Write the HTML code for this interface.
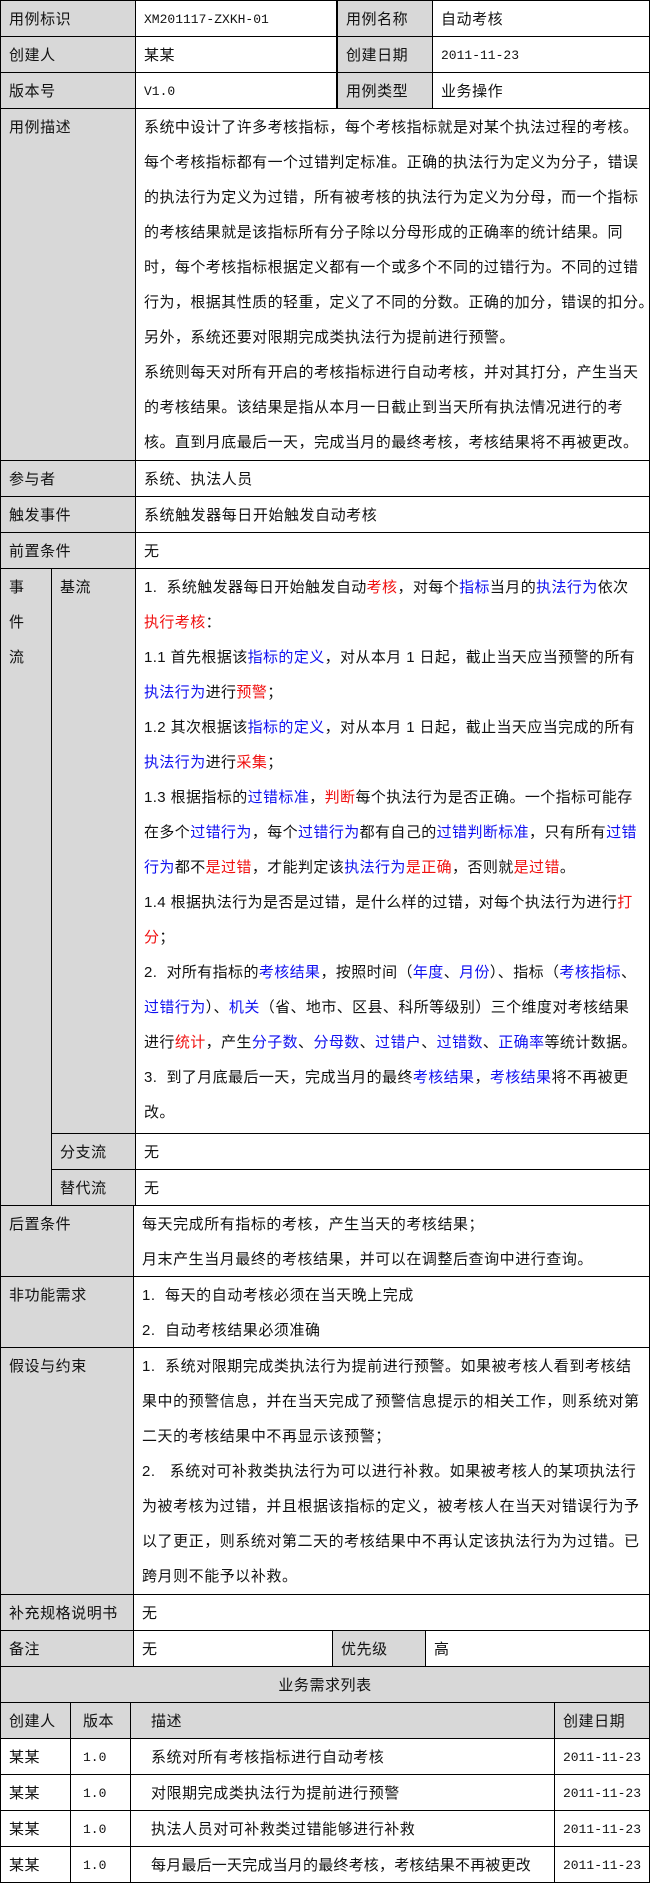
<!DOCTYPE html>
<html><head><meta charset="utf-8">
<style>
body{margin:0;background:#fff;width:650px;height:1890px;overflow:hidden}
#t{position:absolute;left:0;top:0;width:650px;height:1883px;background:#000}
.c{position:absolute;background:#fff;box-sizing:border-box;padding:1px 0 0 8px;line-height:35px;white-space:nowrap;overflow:hidden;
font-family:"Liberation Sans","Noto Sans CJK SC",sans-serif;font-size:15px;letter-spacing:0.55px;color:#111}
.g{background:#d8d8d8}
.b{color:#1010f0}.r{color:#f01010}
.m{font-family:"Liberation Mono","Noto Sans CJK SC",monospace;font-size:13px;letter-spacing:0}
</style></head><body><div id="t">
<div class="c g" style="left:1px;top:1px;width:134px;height:35px">用例标识</div>
<div class="c m" style="left:136px;top:1px;width:200px;height:35px">XM201117-ZXKH-01</div>
<div class="c g" style="left:338px;top:1px;width:94px;height:35px">用例名称</div>
<div class="c" style="left:433px;top:1px;width:216px;height:35px">自动考核</div>
<div class="c g" style="left:1px;top:37px;width:134px;height:35px">创建人</div>
<div class="c" style="left:136px;top:37px;width:200px;height:35px">某某</div>
<div class="c g" style="left:338px;top:37px;width:94px;height:35px">创建日期</div>
<div class="c m" style="left:433px;top:37px;width:216px;height:35px">2011-11-23</div>
<div class="c g" style="left:1px;top:73px;width:134px;height:35px">版本号</div>
<div class="c m" style="left:136px;top:73px;width:200px;height:35px">V1.0</div>
<div class="c g" style="left:338px;top:73px;width:94px;height:35px">用例类型</div>
<div class="c" style="left:433px;top:73px;width:216px;height:35px">业务操作</div>
<div class="c g" style="left:1px;top:109px;width:134px;height:351px">用例描述</div>
<div class="c" style="left:136px;top:109px;width:513px;height:351px;letter-spacing:0.45px">系统中设计了许多考核指标，每个考核指标就是对某个执法过程的考核。<br>每个考核指标都有一个过错判定标准。正确的执法行为定义为分子，错误<br>的执法行为定义为过错，所有被考核的执法行为定义为分母，而一个指标<br>的考核结果就是该指标所有分子除以分母形成的正确率的统计结果。同<br>时，每个考核指标根据定义都有一个或多个不同的过错行为。不同的过错<br>行为，根据其性质的轻重，定义了不同的分数。正确的加分，错误的扣分。<br>另外，系统还要对限期完成类执法行为提前进行预警。<br>系统则每天对所有开启的考核指标进行自动考核，并对其打分，产生当天<br>的考核结果。该结果是指从本月一日截止到当天所有执法情况进行的考<br>核。直到月底最后一天，完成当月的最终考核，考核结果将不再被更改。</div>
<div class="c g" style="left:1px;top:461px;width:134px;height:35px">参与者</div>
<div class="c" style="left:136px;top:461px;width:513px;height:35px">系统、执法人员</div>
<div class="c g" style="left:1px;top:497px;width:134px;height:35px">触发事件</div>
<div class="c" style="left:136px;top:497px;width:513px;height:35px">系统触发器每日开始触发自动考核</div>
<div class="c g" style="left:1px;top:533px;width:134px;height:35px">前置条件</div>
<div class="c" style="left:136px;top:533px;width:513px;height:35px">无</div>
<div class="c g" style="left:1px;top:569px;width:50px;height:636px">事<br>件<br>流</div>
<div class="c g" style="left:52px;top:569px;width:83px;height:564px">基流</div>
<div class="c" style="left:136px;top:569px;width:513px;height:564px;letter-spacing:0.4px">1.&nbsp; 系统触发器每日开始触发自动<span class="r">考核</span>，对每个<span class="b">指标</span>当月的<span class="b">执法行为</span>依次<br><span class="r">执行考核</span>：<br>1.1 首先根据该<span class="b">指标的定义</span>，对从本月 1 日起，截止当天应当预警的所有<br><span class="b">执法行为</span>进行<span class="r">预警</span>；<br>1.2 其次根据该<span class="b">指标的定义</span>，对从本月 1 日起，截止当天应当完成的所有<br><span class="b">执法行为</span>进行<span class="r">采集</span>；<br>1.3 根据指标的<span class="b">过错标准</span>，<span class="r">判断</span>每个执法行为是否正确。一个指标可能存<br>在多个<span class="b">过错行为</span>，每个<span class="b">过错行为</span>都有自己的<span class="b">过错判断标准</span>，只有所有<span class="b">过错</span><br><span class="b">行为</span>都不<span class="r">是过错</span>，才能判定该<span class="b">执法行为</span><span class="r">是正确</span>，否则就<span class="r">是过错</span>。<br>1.4 根据执法行为是否是过错，是什么样的过错，对每个执法行为进行<span class="r">打</span><br><span class="r">分</span>；<br>2.&nbsp; 对所有指标的<span class="b">考核结果</span>，按照时间（<span class="b">年度</span>、<span class="b">月份</span>）、指标（<span class="b">考核指标</span>、<br><span class="b">过错行为</span>）、<span class="b">机关</span>（省、地市、区县、科所等级别）三个维度对考核结果<br>进行<span class="r">统计</span>，产生<span class="b">分子数</span>、<span class="b">分母数</span>、<span class="b">过错户</span>、<span class="b">过错数</span>、<span class="b">正确率</span>等统计数据。<br>3.&nbsp; 到了月底最后一天，完成当月的最终<span class="b">考核结果</span>，<span class="b">考核结果</span>将不再被更<br>改。</div>
<div class="c g" style="left:52px;top:1134px;width:83px;height:35px">分支流</div>
<div class="c" style="left:136px;top:1134px;width:513px;height:35px">无</div>
<div class="c g" style="left:52px;top:1170px;width:83px;height:35px">替代流</div>
<div class="c" style="left:136px;top:1170px;width:513px;height:35px">无</div>
<div class="c g" style="left:1px;top:1206px;width:132px;height:70px">后置条件</div>
<div class="c" style="left:134px;top:1206px;width:515px;height:70px">每天完成所有指标的考核，产生当天的考核结果；<br>月末产生当月最终的考核结果，并可以在调整后查询中进行查询。</div>
<div class="c g" style="left:1px;top:1277px;width:132px;height:70px">非功能需求</div>
<div class="c" style="left:134px;top:1277px;width:515px;height:70px">1.&nbsp; 每天的自动考核必须在当天晚上完成<br>2.&nbsp; 自动考核结果必须准确</div>
<div class="c g" style="left:1px;top:1348px;width:132px;height:246px">假设与约束</div>
<div class="c" style="left:134px;top:1348px;width:515px;height:246px">1.&nbsp; 系统对限期完成类执法行为提前进行预警。如果被考核人看到考核结<br>果中的预警信息，并在当天完成了预警信息提示的相关工作，则系统对第<br>二天的考核结果中不再显示该预警；<br>2.&nbsp;&nbsp; 系统对可补救类执法行为可以进行补救。如果被考核人的某项执法行<br>为被考核为过错，并且根据该指标的定义，被考核人在当天对错误行为予<br>以了更正，则系统对第二天的考核结果中不再认定该执法行为为过错。已<br>跨月则不能予以补救。</div>
<div class="c g" style="left:1px;top:1595px;width:132px;height:35px">补充规格说明书</div>
<div class="c" style="left:134px;top:1595px;width:515px;height:35px">无</div>
<div class="c g" style="left:1px;top:1631px;width:132px;height:35px">备注</div>
<div class="c" style="left:134px;top:1631px;width:198px;height:35px">无</div>
<div class="c g" style="left:333px;top:1631px;width:92px;height:35px">优先级</div>
<div class="c" style="left:426px;top:1631px;width:223px;height:35px">高</div>
<div class="c g" style="left:1px;top:1667px;width:648px;height:35px;text-align:center;padding-left:0">业务需求列表</div>
<div class="c g" style="left:1px;top:1703px;width:69px;height:35px">创建人</div>
<div class="c g" style="left:71px;top:1703px;width:59px;height:35px;padding-left:12px">版本</div>
<div class="c g" style="left:131px;top:1703px;width:423px;height:35px;padding-left:20px">描述</div>
<div class="c g" style="left:555px;top:1703px;width:94px;height:35px">创建日期</div>

<div class="c" style="left:1px;top:1739px;width:69px;height:35px">某某</div>
<div class="c m" style="left:71px;top:1739px;width:59px;height:35px;padding-left:12px">1.0</div>
<div class="c" style="left:131px;top:1739px;width:423px;height:35px;padding-left:20px">系统对所有考核指标进行自动考核</div>
<div class="c m" style="left:555px;top:1739px;width:94px;height:35px">2011-11-23</div>

<div class="c" style="left:1px;top:1775px;width:69px;height:35px">某某</div>
<div class="c m" style="left:71px;top:1775px;width:59px;height:35px;padding-left:12px">1.0</div>
<div class="c" style="left:131px;top:1775px;width:423px;height:35px;padding-left:20px">对限期完成类执法行为提前进行预警</div>
<div class="c m" style="left:555px;top:1775px;width:94px;height:35px">2011-11-23</div>

<div class="c" style="left:1px;top:1811px;width:69px;height:35px">某某</div>
<div class="c m" style="left:71px;top:1811px;width:59px;height:35px;padding-left:12px">1.0</div>
<div class="c" style="left:131px;top:1811px;width:423px;height:35px;padding-left:20px">执法人员对可补救类过错能够进行补救</div>
<div class="c m" style="left:555px;top:1811px;width:94px;height:35px">2011-11-23</div>

<div class="c" style="left:1px;top:1847px;width:69px;height:35px">某某</div>
<div class="c m" style="left:71px;top:1847px;width:59px;height:35px;padding-left:12px">1.0</div>
<div class="c" style="left:131px;top:1847px;width:423px;height:35px;padding-left:20px;letter-spacing:0.2px">每月最后一天完成当月的最终考核，考核结果不再被更改</div>
<div class="c m" style="left:555px;top:1847px;width:94px;height:35px">2011-11-23</div>
</div></body></html>
